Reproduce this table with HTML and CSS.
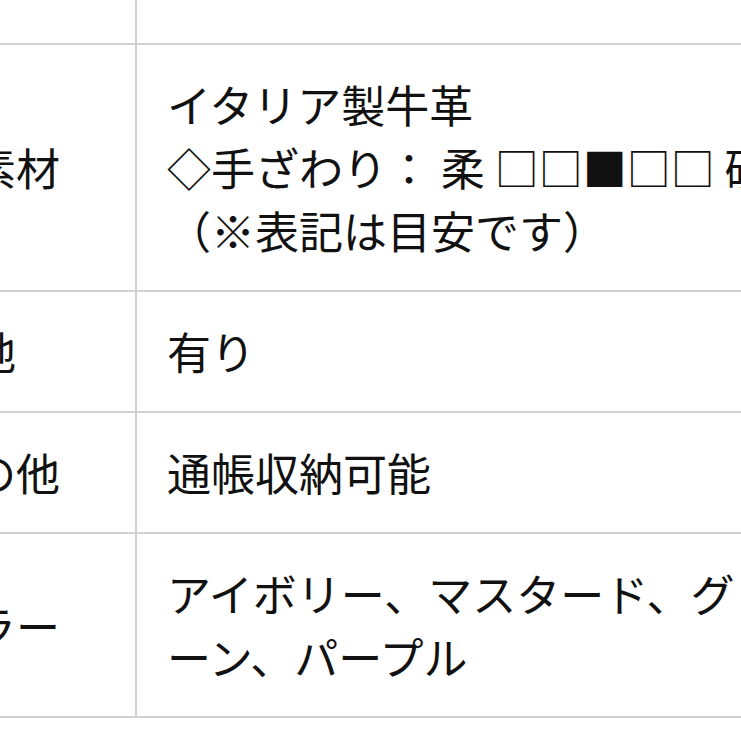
FILE: index.html
```html
<!DOCTYPE html>
<html lang="ja">
<head>
<meta charset="utf-8">
<link rel="stylesheet" href="styles.css">
</head>
<body>
<div class="spec">
  <div class="row top">
    <div class="label"></div>
    <div class="value"></div>
  </div>
  <div class="row">
    <div class="label">表素材</div>
    <div class="value">イタリア製牛革<br>◇手ざわり： 柔 □□■□□ 硬<br>（※表記は目安です）</div>
  </div>
  <div class="row">
    <div class="label">裏地</div>
    <div class="value">有り</div>
  </div>
  <div class="row">
    <div class="label">その他</div>
    <div class="value">通帳収納可能</div>
  </div>
  <div class="row">
    <div class="label">カラー</div>
    <div class="value">アイボリー、マスタード、グリーン、パープル</div>
  </div>
</div>
</body>
</html>
```

FILE: styles.css
```css
html, body {
  margin: 0;
  padding: 0;
  background: #ffffff;
  overflow: hidden;
}

.spec {
  margin-left: -100px;
  width: 1000px;
  font-family: "Noto Sans CJK JP", "Noto Sans", sans-serif;
  font-size: 44px;
  line-height: 63px;
  color: #111111;
  line-break: normal;
}

.row {
  display: grid;
  grid-template-columns: 237px 1fr;
  border-bottom: 2px solid #d2d2d2;
}

.label {
  border-right: 2px solid #d2d2d2;
  padding: 28px 0 28px 28px;
  display: flex;
  align-items: center;
  white-space: nowrap;
}

.value {
  padding: 28px 0 28px 30px;
  width: 625px;
  display: flex;
  align-items: center;
}

.row.top .label,
.row.top .value {
  padding: 0;
  height: 43px;
}
```
